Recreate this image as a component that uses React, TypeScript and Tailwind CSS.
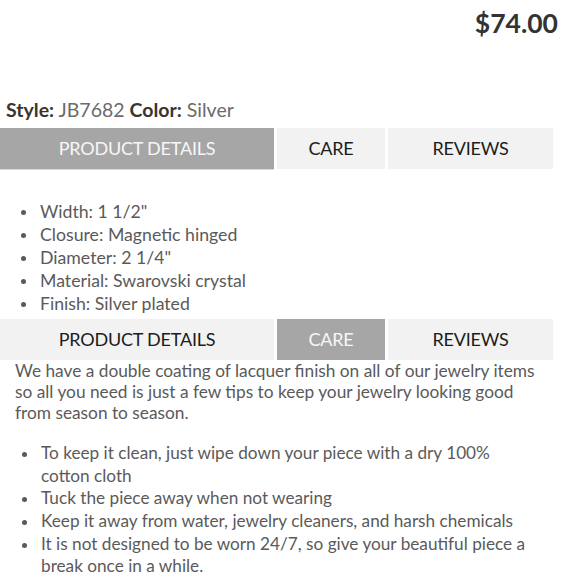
import { useState } from "react";

const specs = [
  'Width: 1 1/2"',
  "Closure: Magnetic hinged",
  'Diameter: 2 1/4"',
  "Material: Swarovski crystal",
  "Finish: Silver plated",
];

const careTips = [
  "To keep it clean, just wipe down your piece with a dry 100% cotton cloth",
  "Tuck the piece away when not wearing",
  "Keep it away from water, jewelry cleaners, and harsh chemicals",
  "It is not designed to be worn 24/7, so give your beautiful piece a break once in a while.",
];

type Tab = "details" | "care" | "reviews";

// ---- tab bar ----
const TabBar = ({ active, onPick }: { active: Tab; onPick: (t: Tab) => void }) => {
  const base = "h-[41px] flex items-center justify-center text-[18px] uppercase tracking-[-0.2px]";
  const on = "bg-[#a6a6a6] text-[#f7f7f7]";
  const off = "bg-[#f2f2f2] text-[#1c1c1c]";
  return (
    <div className="flex w-[553px] gap-[3px]">
      <button
        onClick={() => onPick("details")}
        className={`${base} w-[274px] ${active === "details" ? on : off}`}
      >
        Product Details
      </button>
      <button
        onClick={() => onPick("care")}
        className={`${base} w-[108px] ${active === "care" ? on : off}`}
      >
        Care
      </button>
      <button
        onClick={() => onPick("reviews")}
        className={`${base} flex-1 ${active === "reviews" ? on : off}`}
      >
        Reviews
      </button>
    </div>
  );
};

const Bullets = ({ items, className }: { items: string[]; className: string }) => (
  <ul className={className}>
    {items.map((t) => (
      <li key={t} className="flex">
        <span className="w-[19px] shrink-0 pt-[10px]">
          <span className="block w-[5px] h-[5px] rounded-full bg-[#5a5a5a]"></span>
        </span>
        <span>{t}</span>
      </li>
    ))}
  </ul>
);

export default function App() {
  const [tab, setTab] = useState<Tab>("details");

  return (
    <div className="w-[580px] h-[580px] overflow-hidden bg-white font-['Lato',sans-serif] text-[#5a5a5a]">
      {/* price */}
      <div className="flex justify-end pr-[22px] pt-[8px]">
        <span className="text-[26.5px] leading-[1.2] font-bold text-[#333]">$74.00</span>
      </div>

      {/* style + colour */}
      <div className="pl-[6px] mt-[58px] text-[19.5px] leading-[24px] text-[#6b6b6b]">
        <span className="font-bold text-[#3a3530]">Style:</span> JB7682{" "}
        <span className="font-bold text-[#3a3530]">Color:</span> Silver
      </div>

      <div className="mt-[6px]">
        <TabBar active={tab === "care" ? "details" : "details"} onPick={setTab} />
        <div className="w-[274px] h-[1px] bg-[#d8d8d8]"></div>
      </div>

      <Bullets items={specs} className="pl-[21px] mt-[30px] text-[17.7px] leading-[23px]" />

      <div className="mt-[4px]">
        <TabBar active="care" onPick={setTab} />
      </div>

      <p className="pl-[15px] text-[17.3px] leading-[21px]">
        We have a double coating of lacquer finish on all of our jewelry items
        <br />
        so all you need is just a few tips to keep your jewelry looking good
        <br />
        from season to season.
      </p>

      <Bullets items={careTips} className="pl-[22px] mt-[19px] w-[534px] text-[17.2px] leading-[22.7px]" />
    </div>
  );
}
